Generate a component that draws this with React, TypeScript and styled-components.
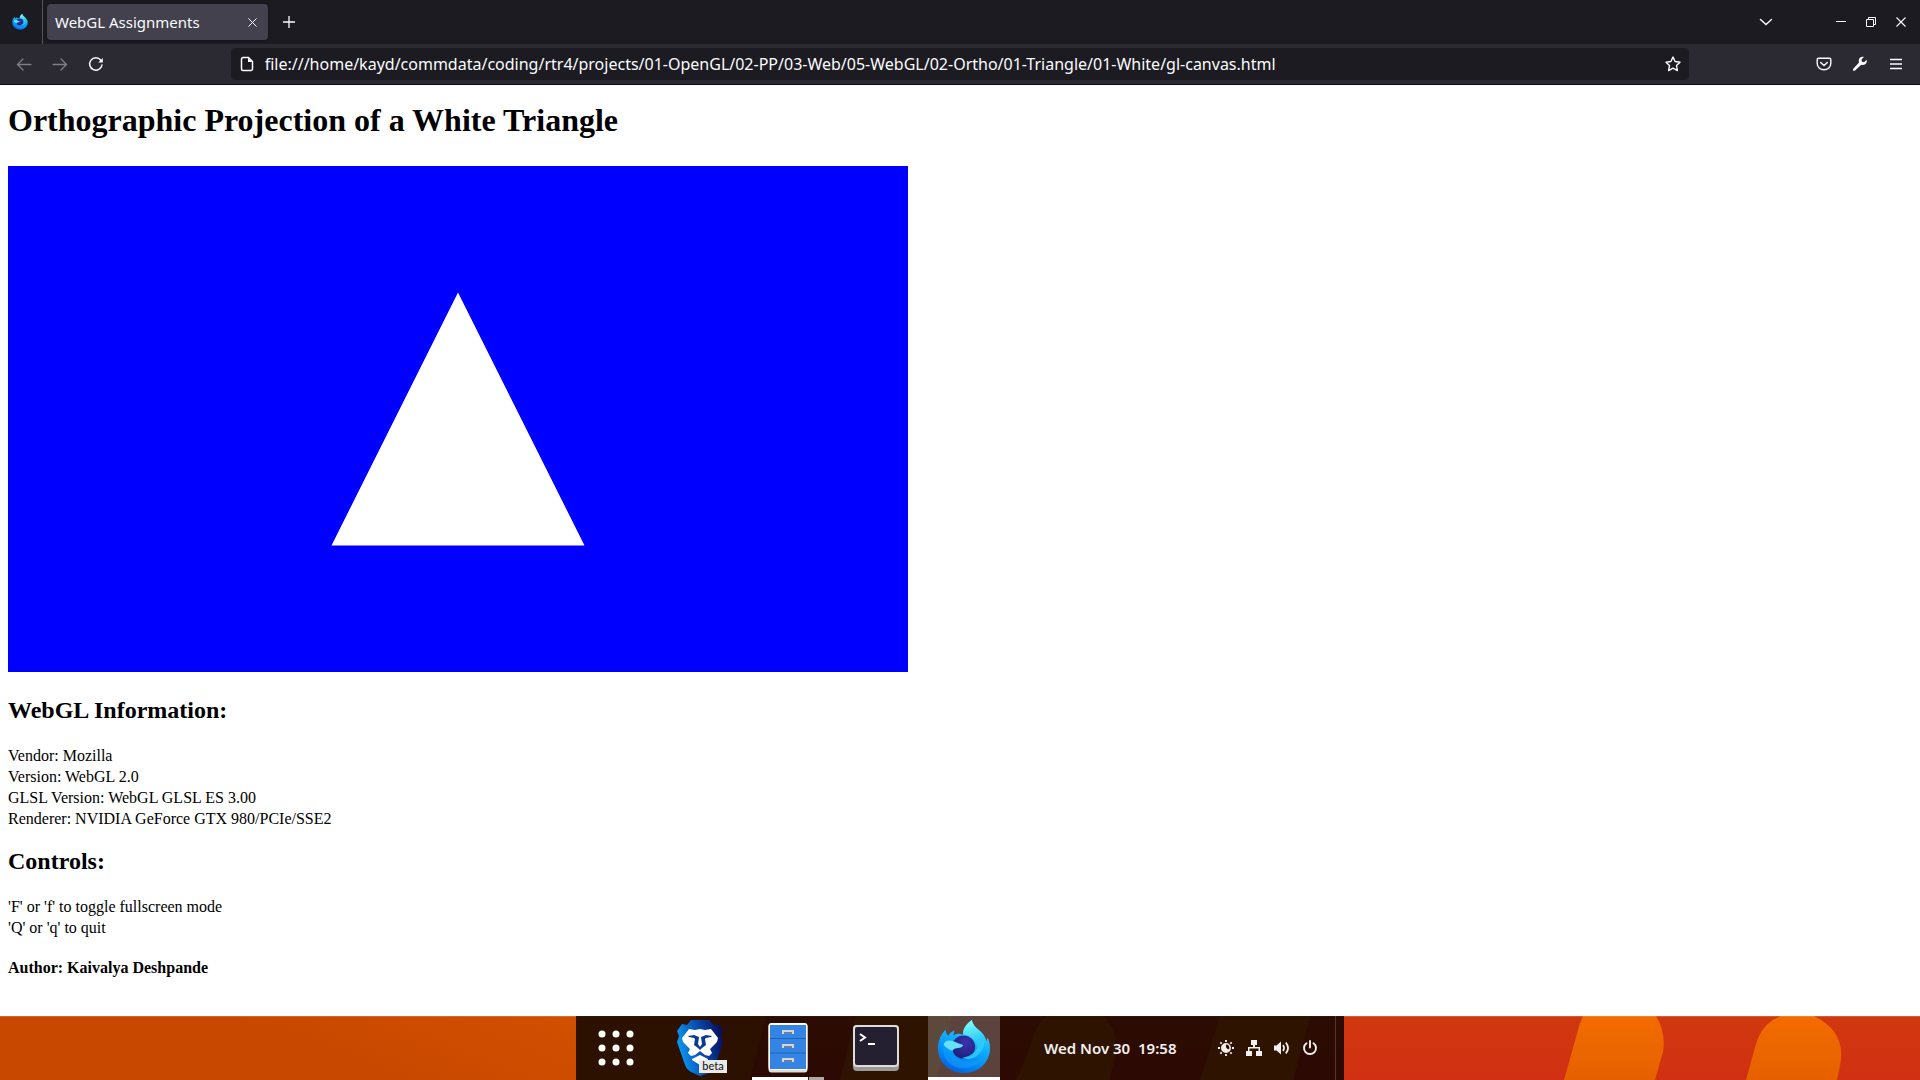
import React from "react";
import styled, { createGlobalStyle } from "styled-components";

const GlobalStyle = createGlobalStyle`
  *, *::before, *::after { box-sizing: border-box; }
  body { margin: 0; background: #fff; }
  button { font: inherit; color: inherit; background: none; border: 0; padding: 0; cursor: pointer; }
  svg { display: block; flex: none; }
`;

const uiFont = `"Noto Sans", "Open Sans", sans-serif`;

const Screen = styled.div`
  min-height: 100vh;
  display: flex;
  flex-direction: column;
`;

const TabBar = styled.header`
  display: flex;
  align-items: center;
  height: 44px;
  background: #1c1b22;
  color: #fbfbfe;
  font-family: ${uiFont};
`;

const PinnedTab = styled.button`
  display: flex;
  align-items: center;
  align-self: stretch;
  width: 43px;
  padding-left: 12px;
  border-right: 1px solid #55545b;
`;

const Tab = styled.div`
  display: flex;
  align-items: center;
  justify-content: space-between;
  width: 221px;
  height: 36px;
  margin-left: 4px;
  padding: 0 4px 0 8px;
  border-radius: 4px;
  background: #42414d;
  box-shadow: 0 0 4px rgba(0, 0, 0, 0.4);
`;

const TabTitle = styled.button`
  font-size: 15px;
  line-height: 24px;
  white-space: nowrap;
`;

const IconButton = styled.button<{ $w?: number; $dim?: boolean }>`
  display: flex;
  align-items: center;
  justify-content: center;
  width: ${(p) => p.$w ?? 36}px;
  height: 32px;
  opacity: ${(p) => (p.$dim ? 0.4 : 1)};
`;

const WindowControls = styled.div`
  display: flex;
  align-items: center;
  margin-left: auto;
  padding-right: 4px;
`;

const ListTabs = styled(IconButton)`
  margin-right: 42px;
`;

const Toolbar = styled.nav`
  display: flex;
  align-items: center;
  height: 41px;
  padding: 0 6px;
  background: #2b2a33;
  border-bottom: 1px solid #0c0c0d;
  color: #fbfbfe;
  font-family: ${uiFont};
`;

const Spring = styled.div`
  flex: 2;
`;

const AddressBar = styled.form`
  display: flex;
  align-items: center;
  flex: 25;
  height: 32px;
  border-radius: 4px;
  background: #1c1b22;
`;

const Address = styled.input`
  flex: 1;
  min-width: 0;
  height: 32px;
  padding: 0 0 0 2px;
  border: 0;
  outline: 0;
  background: transparent;
  color: #fbfbfe;
  font-family: ${uiFont};
  font-size: 16px;
`;

const Page = styled.main`
  flex: 1;
  padding: 16px 8px 0;
  color: #000;
  font-family: "Liberation Serif", "Times New Roman", serif;
  font-size: 16px;
  line-height: 21px;
`;

const Title = styled.h1`
  margin: 0 0 27px;
  font-size: 32px;
  line-height: 38px;
`;

const Scene = styled.svg`
  width: 900px;
  max-width: 100%;
  height: auto;
  margin-bottom: 24px;
  background: #00f;
`;

const SectionTitle = styled.h2`
  margin: 18px 0 21px;
  font-size: 24px;
  line-height: 28px;
`;

const Author = styled.h4`
  margin: 20px 0;
  font-size: 16px;
  line-height: 20px;
`;

const Panel = styled.footer`
  position: relative;
  display: flex;
  justify-content: center;
  height: 64px;
  overflow: hidden;
  background: #c84800;
  font-family: ${uiFont};
`;

const Wallpaper = styled.svg`
  position: absolute;
  inset: 0;
  width: 100%;
  height: 100%;
`;

const Dock = styled.div`
  position: relative;
  display: flex;
  width: 768px;
  background: rgba(0, 0, 0, 0.79);
  color: #f4f0ee;
`;

const AppGrid = styled.button`
  display: flex;
  align-items: center;
  justify-content: center;
  width: 80px;
`;

const DockItem = styled.button<{ $active?: boolean }>`
  position: relative;
  display: flex;
  align-items: flex-start;
  justify-content: center;
  width: 72px;
  margin: 0 8px;
  background: ${(p) => (p.$active ? "rgba(255, 255, 255, 0.23)" : "none")};
`;

const DockArt = styled.span<{ $top: number }>`
  display: block;
  padding-top: ${(p) => p.$top}px;
`;

const Marker = styled.span`
  position: absolute;
  left: 0;
  right: 0;
  bottom: 0;
  display: flex;
  height: 3px;
  background: #fff;
`;

const SecondWindow = styled.span`
  width: 16px;
  margin-left: auto;
  background: #aeaaa9;
  border-left: 1px solid #3a1712;
`;

const Badge = styled.span`
  position: absolute;
  left: 35px;
  bottom: 7px;
  width: 28px;
  height: 13px;
  background: #e9e9ea;
  color: #222;
  font-family: Lato, sans-serif;
  font-size: 11px;
  font-weight: 500;
  line-height: 12px;
  text-align: center;
`;

const Clock = styled.button`
  margin-left: 36px;
  font-size: 15px;
  font-weight: 600;
  white-space: pre;
`;

const Tray = styled.div`
  display: flex;
  align-items: center;
  margin-left: auto;
  padding-right: 11px;
  margin-right: 8px;
  border-right: 1px solid rgba(255, 255, 255, 0.18);
`;

function FirefoxIcon({ size, id }: { size: number; id: string }) {
  return (
    <svg width={size} height={size} viewBox="0 0 56 56" aria-hidden="true">
      <defs>
        <linearGradient id={`${id}-body`} x1="0.75" y1="0.05" x2="0.35" y2="1">
          <stop offset="0" stopColor="#3fe0fb" />
          <stop offset="0.4" stopColor="#12b0fb" />
          <stop offset="0.75" stopColor="#0287f4" />
          <stop offset="1" stopColor="#0560dc" />
        </linearGradient>
        <radialGradient id={`${id}-globe`} cx="0.6" cy="0.3" r="0.8">
          <stop offset="0" stopColor="#3b32a8" />
          <stop offset="0.6" stopColor="#28268e" />
          <stop offset="1" stopColor="#171c70" />
        </radialGradient>
        <linearGradient id={`${id}-flame`} x1="0.5" y1="0" x2="0.7" y2="1">
          <stop offset="0" stopColor="#7dfbfa" />
          <stop offset="0.5" stopColor="#35d3f8" />
          <stop offset="1" stopColor="#0ea4f7" />
        </linearGradient>
      </defs>
      <path
        d="M36 0c-5 4-9 8-9 15-4-1-7-1-10 1 0-2 1-3 1-5-3 1-5 3-6 5-2-1-3-3-3-6C4 15 1 21 1 29c0 15 12 26 27 26s27-11 27-26c0-4-1-8-3-11 0 2 0 3-1 4-1-6-4-9-8-12-4-3-6-6-7-10z"
        fill={`url(#${id}-body)`}
      />
      <path
        d="M36 0c-5 4-9 8-9 15 6 1 11 4 13 9 2 4 2 8 0 12 5-2 8-7 8-13l4 2c-1-7-5-11-9-15-4-3-6-6-7-10z"
        fill={`url(#${id}-flame)`}
      />
      <circle cx="27.5" cy="28" r="12" fill={`url(#${id}-globe)`} />
      <path d="M42 19c2 8-1 13-4 15-5 4-10 5-12 5 3 2 9 2 14-1 8-5 11-13 8-19 0 2-1 3-2 4-1-2-2-3-4-4z" fill="#2fcdf9" opacity=".85" />
      <path
        d="M9 18c-3 6-4 14-1 20 4 8 11 12 20 12 9 0 16-5 20-11-5 4-12 6-19 4-8-2-13-6-14-12 0-2 1-3 3-3-4-2-8-5-9-10z"
        fill="#129cfa"
        opacity=".6"
      />
      <path d="M7 26c0-4 5-6 10-4l5 2 5 2c0 2-3 3-5 3-3 0-5 1-6 3-3-1-7-3-9-6z" fill="#62e3fb" />
    </svg>
  );
}

function BraveIcon() {
  return (
    <svg width="48" height="56" viewBox="0 0 48 56" aria-hidden="true">
      <defs>
        <linearGradient id="brave" x1="0" y1="0.6" x2="1" y2="0.35">
          <stop offset="0" stopColor="#0aa0f5" />
          <stop offset="0.45" stopColor="#0a55bd" />
          <stop offset="1" stopColor="#06105c" />
        </linearGradient>
      </defs>
      <path
        d="M15 0h18l5 5 4-1 5 7-2 5 2 6-8 24c-1 3-3 5-6 7l-9 3-9-4c-3-2-5-4-6-7L1 22l2-6-2-5 5-7 5 1z"
        fill="url(#brave)"
      />
      <path
        d="M13 9l6 1 5-1 5 1 6-1 7 9-1 4-7 7 2 4-3 3-4-1-5-4-5 4-4 1-3-3 2-4-7-7-1-4z"
        fill="#fff"
      />
      <path d="M16 39l8-4 8 4v1l-8 5-8-5z" fill="#fff" />
      <path
        d="M12 16l6-1 5 2-1 7 2 3 2-3-1-7 5-2 6 1-1 1-5 1-1 1 1 6-4 3-2 2-2-2-4-3 1-6-1-1-5-1z"
        fill="#0a3a92"
      />
    </svg>
  );
}

function FilesIcon() {
  return (
    <svg width="40" height="50" viewBox="0 0 40 50" aria-hidden="true">
      <rect x="0.5" y="1" width="39" height="48.5" rx="3" fill="#deddda" />
      <rect x="0.5" y="0" width="39" height="47" rx="3" fill="#fff" />
      <path d="M2 2h36v44H2z" fill="#3584e4" />
      <path d="M2 15.5h36M2 30h36" stroke="#1c64bd" />
      {[7, 21, 35].map((y) => (
        <g key={y}>
          <path d={`M15 ${y + 4}v-3h10v3`} fill="none" stroke="#d8d5d1" strokeWidth="2" />
          <path d={`M16 ${y + 3}h8`} stroke="#85827e" />
        </g>
      ))}
    </svg>
  );
}

function TerminalIcon() {
  return (
    <svg width="46" height="46" viewBox="0 0 46 46" aria-hidden="true">
      <rect width="46" height="46" rx="4" fill="#9a9996" />
      <rect width="46" height="42" rx="4" fill="#deddda" />
      <rect x="2" y="2" width="42" height="38" rx="2" fill="#241f31" />
      <path d="M7 9l5 3.5-5 3.5M15 19h7" fill="none" stroke="#fff" strokeWidth="2" />
    </svg>
  );
}

const line = { fill: "none", stroke: "currentColor" } as const;

function CloseGlyph({ size }: { size: number }) {
  return (
    <svg width={size} height={size} viewBox="0 0 10 10" {...line} strokeWidth="1.1">
      <path d="M.5.5l9 9M9.5.5l-9 9" />
    </svg>
  );
}

export default function App() {
  return (
    <Screen>
      <GlobalStyle />
      <TabBar>
        <PinnedTab aria-label="Firefox View">
          <FirefoxIcon size={16} id="view" />
        </PinnedTab>
        <Tab>
          <TabTitle>WebGL Assignments</TabTitle>
          <IconButton $w={24} aria-label="Close tab">
            <CloseGlyph size={9} />
          </IconButton>
        </Tab>
        <IconButton $w={42} aria-label="New tab">
          <svg width="12" height="12" viewBox="0 0 12 12" {...line} strokeWidth="1.3">
            <path d="M6 0v12M0 6h12" />
          </svg>
        </IconButton>
        <WindowControls>
          <ListTabs $w={36} aria-label="List all tabs">
            <svg width="14" height="8" viewBox="0 0 14 8" {...line} strokeWidth="1.5" strokeLinecap="round">
              <path d="M1.5 1.5L7 6.5l5.500-5" />
            </svg>
          </ListTabs>
          <IconButton $w={30} aria-label="Minimize">
            <svg width="10" height="10" viewBox="0 0 10 10" {...line}>
              <path d="M0 4.500h10" />
            </svg>
          </IconButton>
          <IconButton $w={30} aria-label="Restore">
            <svg width="10" height="10" viewBox="0 0 10 10" {...line}>
              <path d="M.5 2.500h7v7h-7zM2.500 2V.5h7v7H8" />
            </svg>
          </IconButton>
          <IconButton $w={30} aria-label="Close window">
            <CloseGlyph size={10} />
          </IconButton>
        </WindowControls>
      </TabBar>

      <Toolbar>
        <IconButton $dim aria-label="Back">
          <svg width="16" height="16" viewBox="0 0 16 16" {...line} strokeWidth="1.3" strokeLinecap="round">
            <path d="M15 8.500H1.500M7 3L1.500 8.500 7 14" />
          </svg>
        </IconButton>
        <IconButton $dim aria-label="Forward">
          <svg width="16" height="16" viewBox="0 0 16 16" {...line} strokeWidth="1.3" strokeLinecap="round">
            <path d="M1 8.500h13.500M9 3l5.500 5.500L9 14" />
          </svg>
        </IconButton>
        <IconButton aria-label="Reload">
          <svg width="16" height="16" viewBox="0 0 16 16" {...line} strokeWidth="1.5" strokeLinecap="round">
            <path d="M12.800 4.200A6.200 6.200 0 1 0 14 9" />
            <path d="M14.800 2v4.500h-4.500z" fill="currentColor" stroke="none" />
          </svg>
        </IconButton>
        <Spring />
        <AddressBar onSubmit={(e) => e.preventDefault()}>
          <IconButton $w={32} type="button" aria-label="Page information">
            <svg width="14" height="16" viewBox="0 0 14 16" {...line} strokeWidth="1.5">
              <path d="M3 1.500h5.500l4 4v7.500a1.500 1.500 0 0 1-1.500 1.500H3A1.500 1.500 0 0 1 1.500 13V3A1.500 1.500 0 0 1 3 1.500z" />
              <path d="M8 1.500l4.500 4.500H8z" fill="currentColor" stroke="none" />
            </svg>
          </IconButton>
          <Address
            aria-label="Address"
            spellCheck={false}
            defaultValue="file:///home/kayd/commdata/coding/rtr4/projects/01-OpenGL/02-PP/03-Web/05-WebGL/02-Ortho/01-Triangle/01-White/gl-canvas.html"
          />
          <IconButton $w={32} type="button" aria-label="Bookmark this page">
            <svg width="16" height="16" viewBox="0 0 16 16" {...line} strokeWidth="1.4" strokeLinejoin="round">
              <path d="M8 1l2.100 4.500 4.900.7-3.500 3.400.9 5L8 12.200l-4.400 2.400.9-5L1 6.200l4.900-.7z" />
            </svg>
          </IconButton>
        </AddressBar>
        <Spring />
        <IconButton aria-label="Save to Pocket">
          <svg width="16" height="16" viewBox="0 0 16 16" {...line} strokeWidth="1.4" strokeLinecap="round" strokeLinejoin="round">
            <path d="M2.500 2.200h11a1.300 1.300 0 0 1 1.300 1.300v4a6.800 6.300 0 0 1-13.600 0v-4a1.300 1.300 0 0 1 1.300-1.300z" />
            <path d="M4.700 6.500L8 9.500l3.300-3" />
          </svg>
        </IconButton>
        <IconButton aria-label="Developer tools">
          <svg width="16" height="16" viewBox="0 0 16 16" fill="currentColor">
            <path d="M14.600 3.800l-2.500 2.400-2.200-.4-.4-2.200L11.900 1C9.500.2 6.700 1.900 6.700 4.800c0 .6.100 1.100.3 1.600L1.300 12.800c-.5.6-.5 1.300 0 1.800s1.200.4 1.700-.1l6.300-5.800c.5.200 1 .3 1.600.3 2.900 0 4.500-2.800 3.700-5.200z" />
          </svg>
        </IconButton>
        <IconButton aria-label="Open application menu">
          <svg width="12" height="12" viewBox="0 0 12 12" {...line} strokeWidth="1.300">
            <path d="M0 1.500h12M0 6h12M0 10.500h12" />
          </svg>
        </IconButton>
      </Toolbar>

      <Page>
        <Title>Orthographic Projection of a White Triangle</Title>
        <Scene viewBox="0 0 900 506" role="img" aria-label="White triangle on a blue background">
          <path d="M450 126.500L576.500 379.500H323.500z" fill="#fff" />
        </Scene>
        <SectionTitle>WebGL Information:</SectionTitle>
        <div>Vendor: Mozilla</div>
        <div>Version: WebGL 2.0</div>
        <div>GLSL Version: WebGL GLSL ES 3.00</div>
        <div>Renderer: NVIDIA GeForce GTX 980/PCIe/SSE2</div>
        <SectionTitle>Controls:</SectionTitle>
        <div>'F' or 'f' to toggle fullscreen mode</div>
        <div>'Q' or 'q' to quit</div>
        <Author>Author: Kaivalya Deshpande</Author>
      </Page>

      <Panel>
        <Wallpaper viewBox="0 0 1920 64" preserveAspectRatio="xMidYMid slice" aria-hidden="true">
          <defs>
            <linearGradient id="ground" x1="0" y1="0.6" x2="1" y2="0.4">
              <stop offset="0.4" stopColor="#c84800" />
              <stop offset="1" stopColor="#d45200" />
            </linearGradient>
            <linearGradient id="red" x1="0" y1="0" x2="0" y2="1">
              <stop offset="0" stopColor="#d0380f" />
              <stop offset="1" stopColor="#d13012" />
            </linearGradient>
            <linearGradient id="pill" x1="0" y1="0" x2="0" y2="1">
              <stop offset="0" stopColor="#f26c00" />
              <stop offset="1" stopColor="#e66000" />
            </linearGradient>
          </defs>
          <path d="M0 0h770v64H0z" fill="url(#ground)" />
          <path d="M766 0h1154v64H750z" fill="url(#red)" />
          <path d="M856 0h96l-16 64h-96zM1047 0h56q14 13 14 34l-8 30h-93q10-20 16-40 5-17 15-24zM1220 0h90l-17 64h-93z" fill="#d65a00" />
          <path d="M1583 0h73q10 16 7 36l-8 28h-91l14-50q2-8 5-14zM1781 0h33q33 16 26 50l-3 14h-91l10-36q6-21 25-28z" fill="url(#pill)" />
          <path d="M0 .5h1920" stroke="#fff" strokeOpacity=".16" />
        </Wallpaper>
        <Dock>
          <AppGrid aria-label="Show applications">
            <svg width="36" height="36" viewBox="0 0 36 36" fill="#fff">
              {[4, 18, 32].map((y) => [4, 18, 32].map((x) => <circle key={`${x}-${y}`} cx={x} cy={y} r="3.500" />))}
            </svg>
          </AppGrid>
          <DockItem aria-label="Brave beta">
            <DockArt $top={4}>
              <BraveIcon />
            </DockArt>
            <Badge>beta</Badge>
          </DockItem>
          <DockItem aria-label="Files">
            <DockArt $top={7}>
              <FilesIcon />
            </DockArt>
            <Marker>
              <SecondWindow />
            </Marker>
          </DockItem>
          <DockItem aria-label="Terminal">
            <DockArt $top={9}>
              <TerminalIcon />
            </DockArt>
          </DockItem>
          <DockItem $active aria-label="Firefox Developer Edition">
            <DockArt $top={4}>
              <FirefoxIcon size={54} id="dock" />
            </DockArt>
            <Marker />
          </DockItem>
          <Clock>Wed Nov 30{"  "}19:58</Clock>
          <Tray>
            <IconButton $w={28} aria-label="Night light">
              <svg width="16" height="16" viewBox="0 0 16 16" {...line}>
                <path
                  d="M8 0v2M8 14v2M0 8h2M14 8h2M2.300 2.300l1.400 1.400M12.300 12.300l1.400 1.400M2.300 13.700l1.400-1.400M12.300 3.700l1.400-1.400"
                  strokeWidth="1.800"
                />
                <circle cx="8" cy="8" r="4.200" strokeWidth="1.600" />
                <path d="M8 4a4 4 0 1 0 4 5q-5 1-4-5z" fill="currentColor" stroke="none" />
              </svg>
            </IconButton>
            <IconButton $w={28} aria-label="Wired network">
              <svg width="16" height="16" viewBox="0 0 16 16" fill="currentColor">
                <path d="M5 0h6v5H9v2h5v4h2v5h-6v-5h2.500V8.500h-9V11H6v5H0v-5h2V7h5V5H5z" />
              </svg>
            </IconButton>
            <IconButton $w={28} aria-label="Volume">
              <svg width="16" height="16" viewBox="0 0 16 16" fill="currentColor">
                <path d="M0 5.500h2.500L7 1.500v13l-4.500-4H0z" />
                <path d="M9 5q2 3 0 6M11.800 2.500q4.500 5.500 0 11" {...line} strokeWidth="1.800" />
              </svg>
            </IconButton>
            <IconButton $w={28} aria-label="Power">
              <svg width="16" height="16" viewBox="0 0 16 16" {...line} strokeWidth="1.900" strokeLinecap="round">
                <path d="M8 1v6.500M4.500 3.200a6 6 0 1 0 7 0" />
              </svg>
            </IconButton>
          </Tray>
        </Dock>
      </Panel>
    </Screen>
  );
}
